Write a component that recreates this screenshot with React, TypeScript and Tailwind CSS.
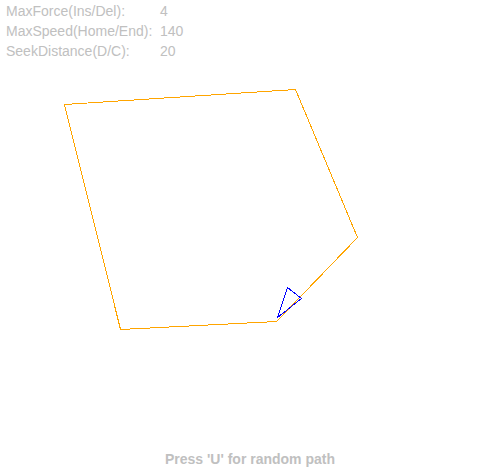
export default function App() {
  const stats = [
    { label: "MaxForce(Ins/Del):", value: "4" },
    { label: "MaxSpeed(Home/End):", value: "140" },
    { label: "SeekDistance(D/C):", value: "20" },
  ];

  return (
    <div className="relative w-[492px] h-[468px] bg-white overflow-hidden font-['Liberation_Sans',Arial,sans-serif] text-[14px] text-[#c0c0c0]">
      {/* canvas drawing */}
      <svg className="absolute inset-0" width={492} height={468} shapeRendering="crispEdges">
        <polyline
          points="64.5,104.5 295.5,89.5 357.5,237.5 276.5,321.5 120.5,329.5 64.5,104.5"
          fill="none"
          stroke="#ffa500"
          strokeWidth={1}
        />
        <polygon
          points="277.5,317.5 287.5,287.5 301.5,298.5"
          fill="none"
          stroke="#0000ff"
          strokeWidth={1}
        />
      </svg>

      <div className="relative flex flex-col pl-[6px] pt-[1px]">
        {stats.map((s) => (
          <div key={s.label} className="flex h-[20px] items-center leading-none">
            <span className="w-[154px]">{s.label}</span>
            <span>{s.value}</span>
          </div>
        ))}
      </div>

      <div className="absolute bottom-0 left-0 right-0 flex justify-center pb-[1px] pl-[8px]">
        <span className="font-bold leading-[16px]">Press 'U' for random path</span>
      </div>
    </div>
  );
}
